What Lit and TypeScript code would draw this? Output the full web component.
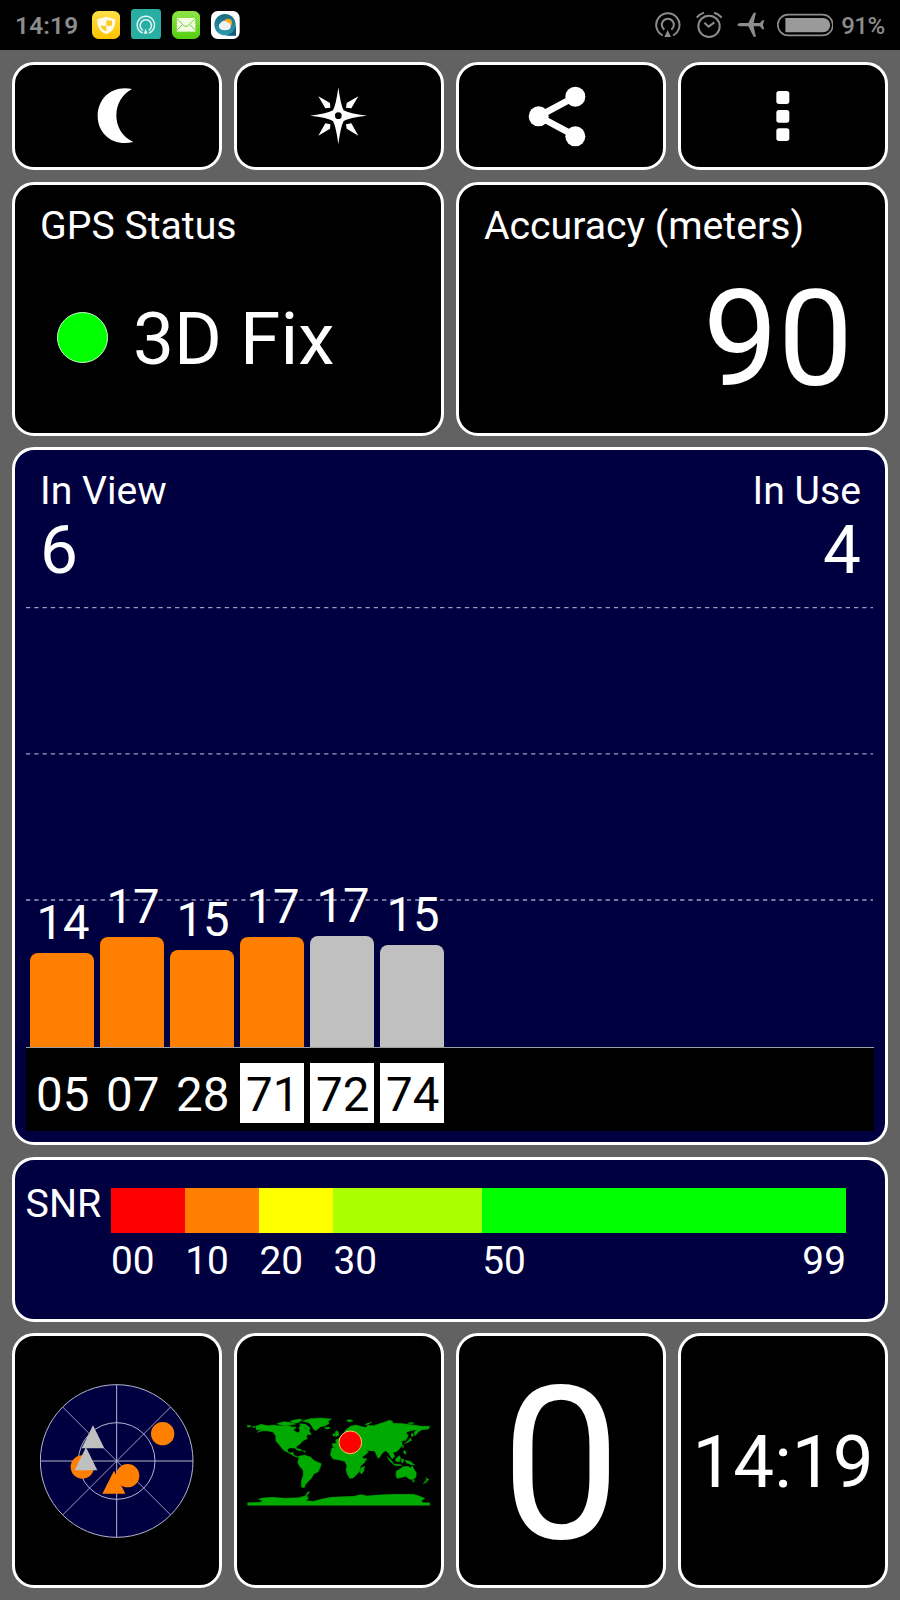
import { LitElement, html, svg, css } from "lit";
import { customElement } from "lit/decorators.js";

const base = css`
  :host {
    display: block;
    box-sizing: border-box;
    font-family: Roboto, "Noto Sans", sans-serif;
    color: #fff;
  }
  * { box-sizing: border-box; }
  svg { display: block; flex: none; }
`;

@customElement("status-bar")
class StatusBar extends LitElement {
  static styles = [base, css`
    :host { height: 50px; background: #000; color: #8c8c8c; }
    .bar { display: flex; justify-content: space-between; height: 50px; padding: 0 15px 0 15px; }
    .left, .right { display: flex; align-items: flex-start; }
    .left { gap: 11px; padding-top: 9px; }
    .right { gap: 15px; padding-top: 11px; }
    .time { width: 65.7px; font-size: 24.4px; font-weight: 600; line-height: 34px; letter-spacing: 0.2px; white-space: nowrap; }
    .battery { display: flex; gap: 8px; margin-left: -3px; }
    .pct { width: 43.7px; font-size: 24px; font-weight: 500; line-height: 30px; letter-spacing: -0.6px; white-space: nowrap; }
  `];
  render() {
    return html`
      <div class="bar">
        <div class="left">
          <span class="time">14:19</span>
          <svg width="28.3" height="30" viewBox="275 27 85 90">
            <defs><linearGradient id="y" x2="0" y2="1"><stop stop-color="#ffe04a"/><stop offset="1" stop-color="#fcc400"/></linearGradient></defs>
            <rect x="275" y="33" width="85" height="84" rx="20" fill="url(#y)"/>
            <path d="M318 50L345 58C346 80 338 95 318 103C297 95 290 80 291 58Z" fill="#fffbe8"/>
            <path d="M318 61V77H335V62ZM318 77H301C303 85 308 90 318 94Z" fill="#f9cc20"/>
          </svg>
          <svg width="30" height="30" viewBox="393 27 90 90">
            <rect x="393" y="27" width="90" height="90" rx="10" fill="#29aea3"/>
            <g fill="none" stroke="#dff5f2" stroke-width="4.5">
              <path d="M428 99A26 26 0 1 1 447 99"/>
              <path d="M429 91A17 17 0 1 1 446 91"/>
            </g>
            <path d="M437 86L443 101H431Z" fill="#dff5f2"/>
          </svg>
          <svg width="28.3" height="30" viewBox="515 27 85 90">
            <defs><linearGradient id="g" x2="0" y2="1"><stop stop-color="#90e348"/><stop offset="1" stop-color="#52cf10"/></linearGradient></defs>
            <rect x="515" y="33" width="85" height="84" rx="20" fill="url(#g)"/>
            <rect x="529" y="54" width="57" height="41" fill="#f0fbe0"/>
            <path d="M529 55L552 78Q557 82 563 77L586 55M529 92L546 74M586 92L569 74" fill="none" stroke="#78c94a" stroke-width="3"/>
            <path d="M528 54V96M587 54V96" stroke="#69d42a" stroke-width="4" stroke-dasharray="4 3"/>
          </svg>
          <svg width="28.7" height="30" viewBox="634 27 86 90">
            <defs><linearGradient id="b" x2="0" y2="1"><stop stop-color="#1b6c80"/><stop offset="1" stop-color="#2d9bb0"/></linearGradient></defs>
            <rect x="634" y="33" width="86" height="84" rx="20" fill="#fff"/>
            <path d="M708 106H676A32 32 0 1 1 708 74Z" fill="url(#b)"/>
            <path d="M676 107H709V74C705 92 695 103 676 107Z" fill="#155c7c"/>
            <circle cx="685" cy="68" r="12" fill="#f9a91c"/>
            <path d="M668 90A12 12 0 0 1 663 68A13 13 0 0 1 684 67A12 12 0 0 1 691 86Q684 92 668 90Z" fill="#edf1f4"/>
          </svg>
        </div>
        <div class="right">
          <svg width="25.7" height="28" viewBox="614 33 77 84">
            <g fill="none" stroke="#8c8c8c" stroke-width="6">
              <path d="M637 106A35 35 0 1 1 668 106"/>
              <path d="M642 89A18 18 0 1 1 663 89"/>
            </g>
            <path d="M652 90L662 111H642Z" fill="#8c8c8c"/>
          </svg>
          <svg width="26.4" height="28" viewBox="736 33 79 84">
            <g fill="none" stroke="#8c8c8c" stroke-width="6">
              <circle cx="775" cy="79" r="32"/>
              <path d="M761 68L774 80L791 67"/>
              <path d="M738 53Q747 42 760 38M813 53Q804 42 790 38"/>
            </g>
          </svg>
          <svg width="27.6" height="28" viewBox="861 33 83 84">
            <path d="M862 74Q863 69 872 69H895L911 38H918L911 69H930L937 61H943L939 74L943 88H937L930 79H911L918 110H911L895 79H872Q863 79 862 74Z" fill="#8c8c8c"/>
          </svg>
          <div class="battery">
            <svg width="56.7" height="28" viewBox="980 33 170 84">
              <rect x="982.5" y="44" width="165" height="62" rx="31" fill="none" stroke="#8c8c8c" stroke-width="5"/>
              <path d="M1005 54H1118A21 21 0 0 1 1118 97H1005Z" fill="#9a9a9a"/>
            </svg>
            <span class="pct">91%</span>
          </div>
        </div>
      </div>`;
  }
}

const LAND = [
  // North America
  "M76 80L92 74L112 78L130 76L150 79L168 77L186 82L198 82L189 92L203 100L209 94L206 82L214 78L226 88L236 92L243 105L232 104L228 112L232 116L217 124L208 134L200 138L198 143L201 150L195 146L180 144L171 149L174 158L183 160L188 157L190 166L202 172L211 168L205 174L192 170L176 160L160 152L149 138L137 124L136 108L128 97L112 94L98 93L80 98L94 90L78 90Z",
  "M140 72L160 66L178 68L196 73L178 77L152 76ZM180 64L206 58L216 61L203 69L190 70ZM208 72L226 74L240 86L236 92L224 84L210 78Z",
  // Greenland and Iceland
  "M216 64L240 57L272 55L303 58L294 64L296 72L284 78L270 82L258 92L250 90L244 78L236 69Z",
  "M282 84L296 82L300 86L288 89Z",
  // South America
  "M208 170L222 166L240 172L252 183L273 192L270 203L263 217L250 223L244 235L233 246L226 254L222 264L213 262L213 245L219 226L218 211L208 200L202 188Z",
  // Africa
  "M305 145L322 142L332 144L346 149L362 151L385 153L392 168L400 177L410 177L401 190L390 200L388 215L378 226L368 235L358 236L351 224L347 210L350 198L343 185L322 180L308 178L300 165Z",
  "M392 205L403 200L400 214L394 223L389 218Z",
  // Europe and Asia
  "M308 142L306 132L318 131L316 121L328 115L340 108L350 110L352 103L342 99L346 90L362 79L378 76L398 82L408 83L412 77L430 78L445 73L462 68L474 63L490 71L520 72L548 76L575 80L598 80L595 88L576 90L566 95L555 108L551 98L560 90L540 93L527 99L534 108L526 122L514 124L516 136L507 148L499 156L488 158L493 170L486 178L480 170L475 160L466 153L457 159L448 173L443 176L433 154L416 153L408 150L414 158L399 170L392 172L382 154L366 151L340 145L325 143Z",
  // British Isles
  "M315 96L322 93L326 106L316 112ZM308 103L313 101L314 108L308 109Z",
  // Arctic islands
  "M348 62L360 60L368 64L356 67ZM404 75L411 71L424 68L412 75ZM470 65L480 62L488 66L476 68ZM534 69L550 69L548 72L536 72Z",
  // Japan
  "M545 99L550 107L545 112L543 106ZM540 114L544 122L533 128L522 132L536 121ZM516 139L520 136L518 145ZM521 152L527 157L526 164L520 160Z",
  // Indonesia and New Guinea
  "M470 171L486 185L489 193L478 184ZM488 193L507 194L515 197L497 198ZM496 177L507 168L511 176L506 187L496 184ZM514 178L521 179L518 190L513 186ZM525 182L540 185L553 196L543 195L528 189Z",
  // Australia and New Zealand
  "M498 215L510 207L518 201L534 200L541 206L545 198L558 220L557 232L549 240L537 238L526 230L511 234L500 236L497 226ZM545 243L553 243L549 248ZM588 234L596 240L588 246ZM586 243L588 248L579 252Z",
  // Caribbean and Aleutians
  "M196 148L208 148L217 153L205 153ZM218 154L226 155L222 158ZM51 77L62 78L60 82L51 82ZM65 82L74 80L72 84Z",
  // Antarctica
  "M52 317V309L88 308L98 303L84 299L96 295L125 293L165 296L205 294L226 288L232 277L238 277L229 289L235 296L226 303L250 305L275 298L302 293L340 291L370 290L392 285L412 289L432 287L460 285L492 284L522 284L550 284L568 290L583 296L573 303L578 309H598V317Z",
];

@customElement("sky-view")
class SkyView extends LitElement {
  static styles = [base];
  render() {
    return html`
      <svg width="154" height="154" viewBox="120 161 462 462">
        <g fill="none" stroke="#b4b4d0" stroke-width="3">
          <circle cx="350" cy="392" r="229" fill="#000040"/>
          <circle cx="350" cy="392" r="115"/>
          <path d="M350 163V621M121 392H579"/>
          <path d="M188 230L512 554M188 554L512 230" stroke-width="2.5"/>
        </g>
        <g fill="#ff8000">
          <circle cx="488" cy="310" r="35"/>
          <circle cx="247" cy="410" r="35"/>
          <circle cx="383" cy="436" r="35"/>
          <path d="M342 421L376 490H307Z"/>
        </g>
        <path d="M279 285L313 354H245ZM258 351L292 420H224Z" fill="#c0c0c0"/>
      </svg>`;
  }
}

@customElement("world-map")
class WorldMap extends LitElement {
  static styles = [base];
  render() {
    return html`
      <svg width="186.67" height="93.33" viewBox="47 43 560 280">
        ${LAND.map((d) => svg`<path d=${d} fill="#00aa00" stroke="#00aa00" stroke-width="1.5"/>`)}
        <circle cx="360" cy="128" r="34" fill="#f00" stroke="#f5d060" stroke-width="3"/>
      </svg>`;
  }
}

const SATS = [
  { id: "05", snr: 14, h: 94, used: true, glonass: false },
  { id: "07", snr: 17, h: 110, used: true, glonass: false },
  { id: "28", snr: 15, h: 97, used: true, glonass: false },
  { id: "71", snr: 17, h: 110, used: true, glonass: true },
  { id: "72", snr: 17, h: 111, used: false, glonass: true },
  { id: "74", snr: 15, h: 102, used: false, glonass: true },
];

@customElement("signal-chart")
class SignalChart extends LitElement {
  static styles = [base, css`
    .head { display: flex; justify-content: space-between; height: 157px; padding: 18px 24px 0 25px; }
    .end { text-align: right; }
    .label { font-size: 39.2px; line-height: 46px; }
    .num { font-size: 67.5px; line-height: 76px; margin-top: -2px; }
    .plot { display: grid; height: 441px; margin: 0 11px; border-bottom: 1px solid #a0a0a0; }
    .lines, .bars { grid-area: 1 / 1; }
    .bars { display: flex; align-items: flex-end; gap: 6px; padding-left: 4px; height: 440px; }
    .col { width: 64px; text-align: center; }
    .snr { font-size: 47.2px; line-height: 48px; padding: 0 0 6px 2px; }
    .bar { border-radius: 8px 8px 0 0; background: #c0c0c0; }
    .used { background: #ff8000; }
    .ids { display: flex; gap: 6px; height: 83px; margin: 0 11px; padding: 15px 0 0 4px; background: #000; }
    .id { width: 64px; height: 60px; padding-left: 1.5px; font-size: 47.5px; line-height: 64px; text-align: center; }
    .glonass { background: #fff; color: #000; }
  `];
  render() {
    return html`
      <div class="head">
        <div><div class="label">In View</div><div class="num">6</div></div>
        <div class="end"><div class="label">In Use</div><div class="num">4</div></div>
      </div>
      <div class="plot">
        <svg class="lines" width="848" height="440" viewBox="0 0 848 440">
          <path d="M0 .5H847M0 146.9H847M0 293H847" stroke="#9c9cc0" stroke-width="1.3" stroke-dasharray="4.3 3.98"/>
        </svg>
        <div class="bars">
          ${SATS.map((s) => html`<div class="col">
            <div class="snr">${s.snr}</div>
            <div class="bar ${s.used ? "used" : ""}" style="height:${s.h}px"></div>
          </div>`)}
        </div>
      </div>
      <div class="ids">
        ${SATS.map((s) => html`<div class="id ${s.glonass ? "glonass" : ""}">${s.id}</div>`)}
      </div>`;
  }
}

const SCALE = [
  { from: "00", w: 74.2, c: "#ff0000" },
  { from: "10", w: 74.2, c: "#ff8000" },
  { from: "20", w: 74.1, c: "#ffff00" },
  { from: "30", w: 148.8, c: "#aaff00" },
  { from: "50", to: "99", w: 364.2, c: "#00ff00" },
];

@customElement("snr-scale")
class SnrScale extends LitElement {
  static styles = [base, css`
    .row { display: flex; padding: 28px 0 0 10.5px; font-size: 38.8px; }
    .title { width: 85px; line-height: 32px; font-size: 39.4px; }
    .scale { display: flex; }
    .color { height: 45px; }
    .marks { display: flex; justify-content: space-between; line-height: 46px; padding: 5px 0 0 0.5px; }
  `];
  render() {
    return html`
      <div class="row">
        <div class="title">SNR</div>
        <div class="scale">
          ${SCALE.map((s) => html`<div style="width:${s.w}px">
            <div class="color" style="background:${s.c}"></div>
            <div class="marks"><span>${s.from}</span>${s.to ? html`<span>${s.to}</span>` : ""}</div>
          </div>`)}
        </div>
      </div>`;
  }
}

@customElement("app-root")
class AppRoot extends LitElement {
  static styles = [base, css`
    :host { width: 900px; height: 1600px; background: #626262; overflow: hidden; }
    .page {
      display: grid;
      grid-template-columns: repeat(4, 210px);
      grid-template-rows: 108.3px 254px 697.7px 165px 255px;
      gap: 11.67px 12px;
      padding: 11.7px 12px 0 12px;
    }
    .card { border: 3px solid #fff; border-radius: 22px; background: #000; overflow: hidden; }
    .center { display: flex; align-items: center; justify-content: center; }
    .half { grid-column: span 2; }
    .full { grid-column: span 4; background: #000040; }
    .title { font-size: 39.2px; line-height: 46px; padding: 18px 20px 0 25px; white-space: nowrap; }
    .fix { display: flex; align-items: center; gap: 25px; padding: 47px 0 0 42px; font-size: 73px; line-height: 86px; }
    .led { width: 51px; height: 51px; border-radius: 50%; background: #0f0; border: 1.5px solid #c8ffc8; margin-top: -2px; }
    .accuracy { font-size: 133.5px; line-height: 140px; padding: 21px 32px 0 0; text-align: right; }
    .speed { font-size: 213.5px; line-height: 240px; padding-top: 8px; }
    .clock { font-size: 72.7px; line-height: 84px; padding-top: 4px; }
  `];
  render() {
    return html`
      <status-bar></status-bar>
      <div class="page">
        <div class="card center">
          <svg width="60" height="60" viewBox="261 258 180 180">
            <path d="M396 267C335 255 293 296 293 348C293 402 340 441 400 426C366 411 349 380 349 346C349 312 366 283 396 267Z" fill="#fff"/>
          </svg>
        </div>
        <div class="card center">
          <svg width="60" height="60" viewBox="927 258 180 180">
            <path d="M1015 262Q1022 315 1031 331Q1047 341 1101 347Q1047 353 1031 363Q1022 380 1015 433Q1008 380 999 363Q983 353 930 347Q983 341 999 331Q1008 315 1015 262Z" fill="#fff"/>
            <path d="M955 289L990 309L991 323L976 325ZM1075 289L1040 309L1038 323L1054 325ZM955 407L976 370L991 373L990 386ZM1075 407L1054 370L1038 373L1040 386Z" fill="#fff"/>
            <circle cx="1015" cy="347" r="10" fill="#000"/>
          </svg>
        </div>
        <div class="card center">
          <svg width="66.67" height="66.67" viewBox="233 247 200 200">
            <path d="M375 288L265 347L375 406" fill="none" stroke="#fff" stroke-width="20"/>
            <circle cx="265" cy="347" r="30" fill="#fff"/><circle cx="375" cy="288" r="30" fill="#fff"/><circle cx="375" cy="407" r="30" fill="#fff"/>
          </svg>
        </div>
        <div class="card center">
          <svg width="60" height="60" viewBox="908 258 180 180">
            <g fill="#fff"><rect x="978" y="273" width="39" height="39" rx="8"/><rect x="978" y="330" width="39" height="38" rx="8"/><rect x="978" y="385" width="39" height="38" rx="8"/></g>
          </svg>
        </div>

        <div class="card half">
          <div class="title">GPS Status</div>
          <div class="fix"><div class="led"></div><span>3D Fix</span></div>
        </div>
        <div class="card half">
          <div class="title">Accuracy (meters)</div>
          <div class="accuracy">90</div>
        </div>

        <div class="card full"><signal-chart></signal-chart></div>
        <div class="card full"><snr-scale></snr-scale></div>

        <div class="card center"><sky-view></sky-view></div>
        <div class="card center"><world-map></world-map></div>
        <div class="card center"><div class="speed">0</div></div>
        <div class="card center"><div class="clock">14:19</div></div>
      </div>`;
  }
}
